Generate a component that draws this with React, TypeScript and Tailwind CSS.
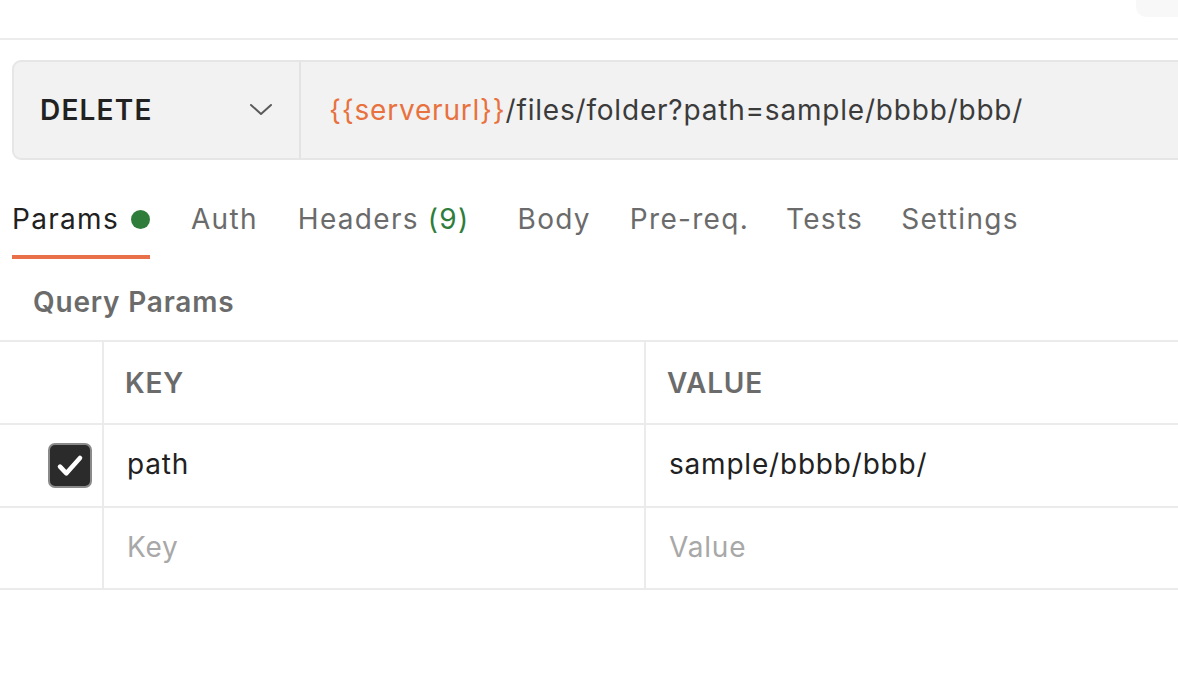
import React from "react";

const tabs = [
  { label: "Auth", ml: "ml-[41px]" },
  { label: "Headers", count: "(9)", ml: "ml-[40px]" },
  { label: "Body", ml: "ml-[48px]" },
  { label: "Pre-req.", ml: "ml-[39px]" },
  { label: "Tests", ml: "ml-[37px]" },
  { label: "Settings", ml: "ml-[38px]" },
];

const Check = () => (
  <div className="w-[44px] h-[45px] rounded-[7px] bg-[#2b2b2b] border-2 border-[#8a8a8a] flex items-center justify-center">
    <svg width="32" height="32" viewBox="0 0 24 24" fill="none">
      <path d="M4.5 12.5l4.8 5L19.5 6" stroke="#fff" strokeWidth="3.4" strokeLinecap="round" strokeLinejoin="round" />
    </svg>
  </div>
);

const App = () => {
  return (
    <div className="w-[1178px] h-[692px] bg-white overflow-hidden font-['Inter',sans-serif] tracking-[0.8px]">
      {/* top strip */}
      <div className="h-[38px] flex justify-end">
        <div className="w-[42px] h-[17px] bg-[#f8f8f8] rounded-bl-[10px]" />
      </div>
      <div className="h-[2px] bg-[#ececec]" />

      {/* request bar */}
      <div className="mt-[20px] ml-[12px] mr-[-40px] h-[100px] flex bg-[#f2f2f2] border-2 border-[#e6e6e6] rounded-[9px]">
        <div className="w-[287px] flex items-center justify-between pl-[26px] pr-[26px] border-r-2 border-[#e3e3e3]">
          <span className="text-[28px] font-semibold text-[#212121] tracking-[1.2px]">DELETE</span>
          <svg width="24" height="24" viewBox="0 0 24 24" fill="none">
            <path d="M2 7l10 9 10-9" stroke="#5a5a5a" strokeWidth="2" strokeLinecap="round" strokeLinejoin="round" />
          </svg>
        </div>
        <div className="flex items-center pl-[28px] text-[28px] text-[#3b3b3b]">
          <span className="text-[#e8713e]">{"{{serverurl}}"}</span>
          <span>/files/folder?path=sample/bbbb/bbb/</span>
        </div>
      </div>

      {/* tabs */}
      <div className="mt-[38px] ml-[12px] flex items-start text-[28px] text-[#6b6b6b] tracking-[1.3px]">
        <div className="flex flex-col">
          <div className="flex items-center h-[42px]">
            <span className="text-[#212121]">Params</span>
            <span className="ml-[12px] w-[19px] h-[19px] rounded-full bg-[#2e7d3a]" />
          </div>
          <div className="mt-[15px] h-[4px] bg-[#e9714a]" />
        </div>
        {tabs.map((t) => (
          <div key={t.label} className={`${t.ml} flex items-center h-[42px]`}>
            <span>{t.label}</span>
            {t.count && <span className="ml-[9px] text-[#2e7d3a]">{t.count}</span>}
          </div>
        ))}
      </div>

      <div className="mt-[23px] ml-[33px] h-[40px] flex items-center text-[28px] font-semibold text-[#6b6b6b]">
        Query Params
      </div>

      {/* table */}
      <div className="mt-[18px] border-t-2 border-[#ebebeb] text-[28px]">
        <div className="grid grid-cols-[104px_542px_1fr] h-[83px] border-b-2 border-[#ebebeb]">
          <div className="border-r-2 border-[#ebebeb]" />
          <div className="border-r-2 border-[#ebebeb] flex items-center pl-[21px] font-semibold text-[#6b6b6b]">KEY</div>
          <div className="flex items-center pl-[21px] font-semibold text-[#6b6b6b]">VALUE</div>
        </div>
        <div className="grid grid-cols-[104px_542px_1fr] h-[83px] border-b-2 border-[#ebebeb]">
          <div className="border-r-2 border-[#ebebeb] flex items-center pl-[48px]">
            <Check />
          </div>
          <div className="border-r-2 border-[#ebebeb] flex items-center pl-[23px] pb-[3px] text-[#212121]">path</div>
          <div className="flex items-center pl-[23px] pb-[3px] text-[#212121]">sample/bbbb/bbb/</div>
        </div>
        <div className="grid grid-cols-[104px_542px_1fr] h-[82px] border-b-2 border-[#ebebeb]">
          <div className="border-r-2 border-[#ebebeb]" />
          <div className="border-r-2 border-[#ebebeb] flex items-center pl-[23px] pb-[3px] text-[#a8a8a8]">Key</div>
          <div className="flex items-center pl-[23px] pb-[3px] text-[#a8a8a8]">Value</div>
        </div>
      </div>
    </div>
  );
};

export default App;
